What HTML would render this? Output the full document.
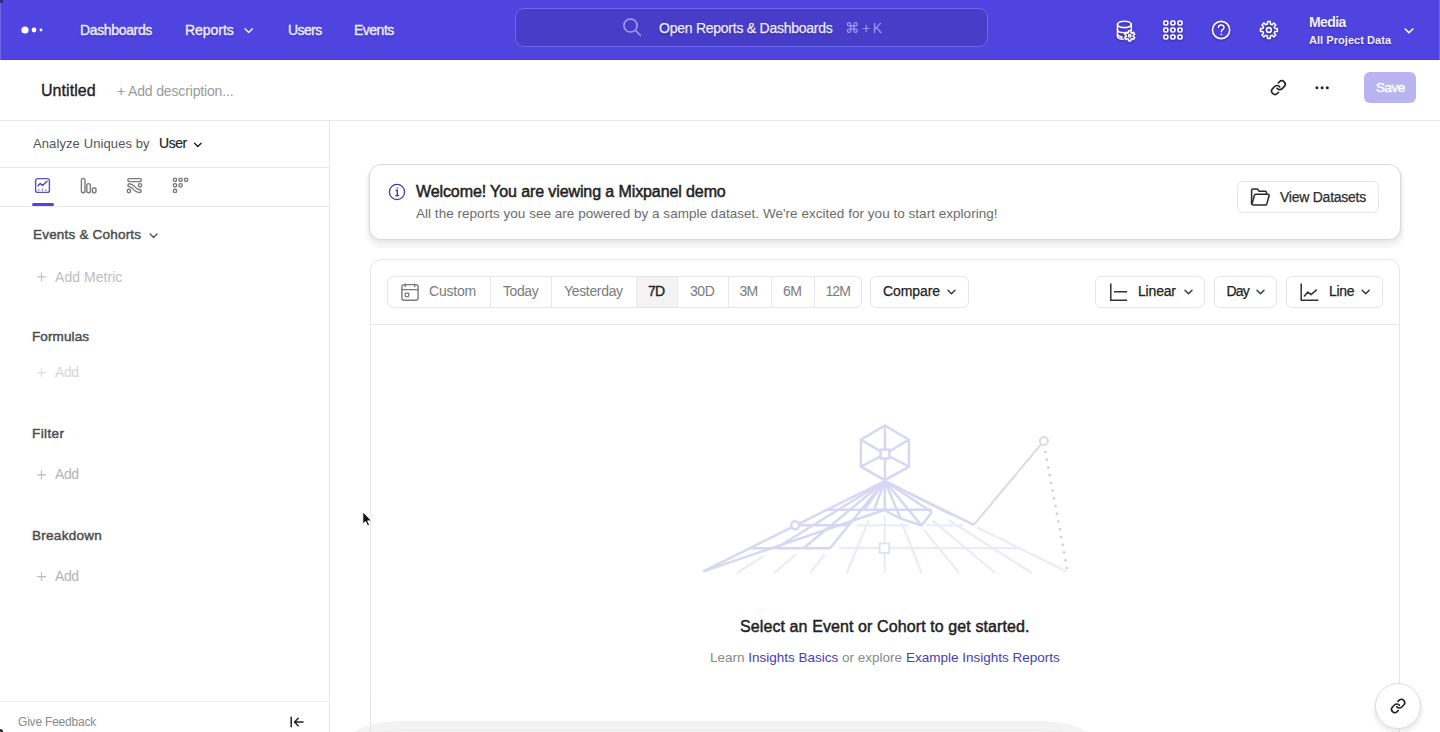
<!DOCTYPE html><html><head><meta charset="utf-8"><title>Insights</title><style>
*{box-sizing:border-box}
html,body{margin:0;padding:0;width:1440px;height:732px;overflow:hidden;background:#fff;font-family:"Liberation Sans",sans-serif}
.t{position:absolute;white-space:nowrap}
.a{position:absolute}
svg{position:absolute;overflow:visible}
</style></head><body>
<div class="a" style="left:0;top:0;width:1440px;height:60px;background:#4f44e0"></div>
<div class="a" style="left:0;top:59px;width:1440px;height:1px;background:#4a40d6"></div>
<div class="a" style="left:0;top:0;width:1px;height:60px;background:#6c63e6"></div>
<div class="a" style="left:-2px;top:-2px;width:5px;height:5px;border-radius:50%;background:#2e2878"></div>
<svg style="left:0;top:0" width="60" height="60"><circle cx="25" cy="30" r="3.6" fill="#fff"/><circle cx="34" cy="30" r="2.4" fill="#fff"/><circle cx="41" cy="30" r="1.4" fill="#fff"/></svg>
<div class="t " style="left:80px;top:22px;font-size:14px;line-height:16px;color:#ecebfc;font-weight:400;letter-spacing:-0.35px;text-shadow:0 1px 2px rgba(20,10,80,.45);-webkit-text-stroke:0.4px #ecebfc">Dashboards</div>
<div class="t " style="left:185px;top:22px;font-size:14px;line-height:16px;color:#ecebfc;font-weight:400;letter-spacing:-0.05px;text-shadow:0 1px 2px rgba(20,10,80,.45);-webkit-text-stroke:0.4px #ecebfc">Reports</div>
<svg style="left:0;top:0" width="1" height="1"><path d="M245 28.8 L248.7 32.5 L252.4 28.8" fill="none" stroke="#ecebfc" stroke-width="1.5" stroke-linecap="round" stroke-linejoin="round"/></svg>
<div class="t " style="left:288px;top:22px;font-size:14px;line-height:16px;color:#ecebfc;font-weight:400;letter-spacing:-0.55px;text-shadow:0 1px 2px rgba(20,10,80,.45);-webkit-text-stroke:0.4px #ecebfc">Users</div>
<div class="t " style="left:354px;top:22px;font-size:14px;line-height:16px;color:#ecebfc;font-weight:400;letter-spacing:-0.5px;text-shadow:0 1px 2px rgba(20,10,80,.45);-webkit-text-stroke:0.4px #ecebfc">Events</div>
<div class="a" style="left:515px;top:8px;width:473px;height:39px;border-radius:9px;background:#483dc8;border:1.5px solid #6d65ec"></div>
<svg style="left:0;top:0" width="1" height="1"><circle cx="630.5" cy="25.5" r="6.6" fill="none" stroke="#a6a0f2" stroke-width="1.5"/><path d="M635.3 30.3 L640.5 35.5" stroke="#a6a0f2" stroke-width="1.5" stroke-linecap="round"/></svg>
<div class="t " style="left:659px;top:19.6px;font-size:14px;line-height:16px;color:#ecebfc;font-weight:400;letter-spacing:-0.25px;text-shadow:0 1px 2px rgba(20,10,80,.45);-webkit-text-stroke:0.25px #ecebfc">Open Reports &amp; Dashboards</div>
<svg style="left:0;top:0" width="1" height="1"><g transform="translate(845.7,20.9) scale(0.55)" fill="none" stroke="#9d97ee" stroke-width="2.4" stroke-linecap="round" stroke-linejoin="round"><path d="M15 6v12a3 3 0 1 0 3-3H6a3 3 0 1 0 3 3V6a3 3 0 1 0-3 3h12a3 3 0 1 0-3-3"/></g></svg>
<div class="t " style="left:862px;top:19.6px;font-size:14px;line-height:16px;color:#9d97ee;font-weight:400;letter-spacing:-0.6px;">+ K</div>
<svg style="left:0;top:0;filter:drop-shadow(0 1px 1px rgba(20,10,80,.5))" width="1" height="1" fill="none" stroke="#ffffff" stroke-width="1.6" stroke-linecap="round" stroke-linejoin="round">
<ellipse cx="1124.4" cy="24.4" rx="6.9" ry="3.2"/>
<path d="M1117.5 24.4 V36.5 C1117.5 38.2 1120.3 39.2 1123.5 39.3"/>
<path d="M1131.3 24.4 V30.5"/>
<path d="M1117.5 29.8 C1117.5 31.6 1120.6 32.8 1124.4 32.8 C1126 32.8 1127.3 32.6 1128.5 32.2"/>
<path d="M1117.5 34.5 C1117.8 35.8 1119.5 36.7 1122 37.1"/>
</svg>
<svg style="left:0;top:0;filter:drop-shadow(0 1px 1px rgba(20,10,80,.5))" width="1" height="1" fill="none" stroke="#ffffff" stroke-width="1.5" stroke-linejoin="round"><path d="M1130.92 39.18 L1130.91 41.06 L1128.49 41.06 L1128.48 39.18 L1127.47 38.60 L1125.84 39.53 L1124.63 37.43 L1126.25 36.48 L1126.25 35.32 L1124.63 34.37 L1125.84 32.27 L1127.47 33.20 L1128.48 32.62 L1128.49 30.74 L1130.91 30.74 L1130.92 32.62 L1131.93 33.20 L1133.56 32.27 L1134.77 34.37 L1133.15 35.32 L1133.15 36.48 L1134.77 37.43 L1133.56 39.53 L1131.93 38.60Z"/><circle cx="1129.7" cy="35.8" r="1.2"/></svg>
<svg style="left:0;top:0;filter:drop-shadow(0 1px 1px rgba(20,10,80,.5))" width="1" height="1" fill="none" stroke="#ffffff" stroke-width="1.7"><rect x="1163.8" y="21" width="4" height="4" rx="1.3"/><rect x="1163.8" y="28" width="4" height="4" rx="1.3"/><rect x="1163.8" y="35" width="4" height="4" rx="1.3"/><rect x="1170.9" y="21" width="4" height="4" rx="1.3"/><rect x="1170.9" y="28" width="4" height="4" rx="1.3"/><rect x="1170.9" y="35" width="4" height="4" rx="1.3"/><rect x="1178" y="21" width="4" height="4" rx="1.3"/><rect x="1178" y="28" width="4" height="4" rx="1.3"/><rect x="1178" y="35" width="4" height="4" rx="1.3"/></svg>
<svg style="left:0;top:0;filter:drop-shadow(0 1px 1px rgba(20,10,80,.5))" width="1" height="1" fill="none" stroke="#ffffff" stroke-width="1.6" stroke-linecap="round">
<circle cx="1221.1" cy="30" r="8.6"/>
<path d="M1218.4 27.6 C1218.4 25.8 1219.7 25 1221.2 25 C1222.9 25 1224 26 1224 27.4 C1224 29.3 1221.4 29.5 1221.4 31.8" stroke-width="1.4"/>
<circle cx="1221.4" cy="34.4" r="0.3" fill="#ffffff" stroke-width="1.2"/>
</svg>
<svg style="left:0;top:0;filter:drop-shadow(0 1px 1px rgba(20,10,80,.5))" width="1" height="1" fill="none" stroke="#ffffff" stroke-width="1.6" stroke-linejoin="round"><path d="M1274.92 28.51 L1277.39 28.65 L1277.39 31.35 L1274.92 31.49 L1274.21 33.20 L1275.86 35.05 L1273.95 36.96 L1272.10 35.31 L1270.39 36.02 L1270.25 38.49 L1267.55 38.49 L1267.41 36.02 L1265.70 35.31 L1263.85 36.96 L1261.94 35.05 L1263.59 33.20 L1262.88 31.49 L1260.41 31.35 L1260.41 28.65 L1262.88 28.51 L1263.59 26.80 L1261.94 24.95 L1263.85 23.04 L1265.70 24.69 L1267.41 23.98 L1267.55 21.51 L1270.25 21.51 L1270.39 23.98 L1272.10 24.69 L1273.95 23.04 L1275.86 24.95 L1274.21 26.80Z"/><circle cx="1268.9" cy="30" r="2.4"/></svg>
<div class="t " style="left:1309px;top:14px;font-size:14px;line-height:16px;color:#f1f0fd;font-weight:700;letter-spacing:-0.6px;text-shadow:0 1px 2px rgba(20,10,80,.45);">Media</div>
<div class="t " style="left:1309px;top:33.8px;font-size:11px;line-height:12px;color:#f1f0fd;font-weight:700;letter-spacing:0.05px;text-shadow:0 1px 2px rgba(20,10,80,.45);">All Project Data</div>
<svg style="left:0;top:0" width="1" height="1"><path d="M1405.2 29 L1409 32.8 L1412.8 29" fill="none" stroke="#fff" stroke-width="1.6" stroke-linecap="round" stroke-linejoin="round"/></svg>
<div class="a" style="left:1439px;top:0;width:1px;height:60px;background:#6c63ee"></div>
<div class="t " style="left:41px;top:81.5px;font-size:16px;line-height:17px;color:#222;font-weight:400;letter-spacing:0.05px;-webkit-text-stroke:0.35px #222">Untitled</div>
<div class="t " style="left:117px;top:82.5px;font-size:14px;line-height:16px;color:#9a9a9a;font-weight:400;letter-spacing:-0.15px;">+ Add description...</div>
<div class="a" style="left:0;top:120px;width:1440px;height:1px;background:#e8e8e8"></div>
<svg style="left:0;top:0" width="1" height="1"><g transform="translate(1270.24,79.44) scale(0.68)" fill="none" stroke="#222" stroke-width="2.3529411764705883" stroke-linecap="round" stroke-linejoin="round">
<path d="M10 13a5 5 0 0 0 7.54.54l3-3a5 5 0 0 0-7.07-7.07l-1.72 1.71"/><path d="M14 11a5 5 0 0 0-7.54-.54l-3 3a5 5 0 0 0 7.07 7.07l1.71-1.71"/></g></svg>
<svg style="left:0;top:0" width="1" height="1" fill="#222"><circle cx="1316.9" cy="87.8" r="1.5"/><circle cx="1322.1" cy="87.8" r="1.5"/><circle cx="1327.3" cy="87.8" r="1.5"/></svg>
<div class="a" style="left:1364px;top:72px;width:52px;height:31px;border-radius:6px;background:#b9b4f0"></div>
<div class="t " style="left:1376px;top:79.6px;font-size:13.5px;line-height:15px;color:#fff;font-weight:400;letter-spacing:-0.5px;-webkit-text-stroke:0.4px #fff">Save</div>
<div class="a" style="left:329px;top:121px;width:1px;height:611px;background:#e8e8e8"></div>
<div class="t " style="left:33px;top:136px;font-size:13px;line-height:15px;color:#555;font-weight:400;letter-spacing:0.1px;">Analyze Uniques by</div>
<div class="t " style="left:159px;top:135px;font-size:14px;line-height:16px;color:#222;font-weight:400;letter-spacing:-0.45px;-webkit-text-stroke:0.2px #222">User</div>
<svg style="left:0;top:0" width="1" height="1"><path d="M194.5 143.2 L197.8 146.5 L201.1 143.2" fill="none" stroke="#222" stroke-width="1.4" stroke-linecap="round" stroke-linejoin="round"/></svg>
<div class="a" style="left:0;top:167px;width:329px;height:1px;background:#e8e8e8"></div>
<div class="a" style="left:0;top:206px;width:329px;height:1px;background:#e8e8e8"></div>
<div class="a" style="left:32px;top:203px;width:22px;height:3px;border-radius:2px;background:#4f44e0"></div>
<svg style="left:0;top:0" width="1" height="1" fill="none" stroke-width="1.4" stroke-linecap="round" stroke-linejoin="round">
<rect x="35.6" y="178.6" width="13.8" height="13.8" rx="2" stroke="#5a52c8"/>
<path d="M38 185.8 L40.3 183.5 L42.5 185.5 L47 181.2" stroke="#4a42b0"/>
<path d="M38.8 189.8 V190.2 M42.5 189.3 V190.4 M45.9 189.8 V190.2" stroke="#8a84d0"/>
<rect x="81.4" y="178.4" width="3.6" height="14.4" rx="1.8" stroke="#7a7a7a"/>
<rect x="86.8" y="183.6" width="3.6" height="9.2" rx="1.8" stroke="#7a7a7a"/>
<rect x="92.4" y="187.8" width="3.6" height="5" rx="1.8" stroke="#7a7a7a"/>
<rect x="127.8" y="178.6" width="13.6" height="3" rx="1.5" stroke="#7a7a7a"/>
<path d="M129.4 185.3 C133.6 185.3 134.6 191 138.9 191 H139.6" stroke="#7a7a7a" stroke-width="4.4"/>
<path d="M129.4 185.3 C133.6 185.3 134.6 191 138.9 191 H139.6" stroke="#fff" stroke-width="1.6"/>
<circle cx="140" cy="185.3" r="1.7" stroke="#7a7a7a"/>
<circle cx="128.9" cy="191" r="1.7" stroke="#7a7a7a"/>
<circle cx="175" cy="179.8" r="1.7" stroke="#7a7a7a"/><circle cx="180.6" cy="179.8" r="1.7" stroke="#7a7a7a"/><circle cx="186.1" cy="179.8" r="1.7" stroke="#7a7a7a"/>
<circle cx="175" cy="185.3" r="1.7" stroke="#7a7a7a"/><circle cx="180.6" cy="185.3" r="1.7" stroke="#7a7a7a"/>
<circle cx="175" cy="190.9" r="1.7" stroke="#7a7a7a"/>
</svg>
<div class="t " style="left:33px;top:227.2px;font-size:13.5px;line-height:15px;color:#4d4d4d;font-weight:400;letter-spacing:0.2px;-webkit-text-stroke:0.45px #4d4d4d">Events &amp; Cohorts</div>
<svg style="left:0;top:0" width="1" height="1"><path d="M150.2 234.1 L153.6 237.5 L157 234.1" fill="none" stroke="#555" stroke-width="1.4" stroke-linecap="round" stroke-linejoin="round"/></svg>
<svg style="left:0;top:0" width="1" height="1"><path d="M37.0 276.9 H46.0 M41.5 272.4 V281.4" stroke="#c4c4c4" stroke-width="1.2"/></svg>
<div class="t " style="left:55px;top:268.7px;font-size:14px;line-height:16px;color:#bdbdbd;font-weight:400;letter-spacing:0.05px;">Add Metric</div>
<div class="t " style="left:32px;top:329.2px;font-size:13.5px;line-height:15px;color:#4d4d4d;font-weight:400;letter-spacing:0.12px;-webkit-text-stroke:0.45px #4d4d4d">Formulas</div>
<svg style="left:0;top:0" width="1" height="1"><path d="M37.0 372.6 H46.0 M41.5 368.1 V377.1" stroke="#dedede" stroke-width="1.2"/></svg>
<div class="t " style="left:55px;top:364.4px;font-size:14px;line-height:16px;color:#d6d6d6;font-weight:400;letter-spacing:-0.45px;">Add</div>
<div class="t " style="left:32px;top:425.6px;font-size:13.5px;line-height:15px;color:#4d4d4d;font-weight:400;letter-spacing:0.4px;-webkit-text-stroke:0.45px #4d4d4d">Filter</div>
<svg style="left:0;top:0" width="1" height="1"><path d="M37.0 474.8 H46.0 M41.5 470.3 V479.3" stroke="#bdbdbd" stroke-width="1.2"/></svg>
<div class="t " style="left:55px;top:466.4px;font-size:14px;line-height:16px;color:#b3b3b3;font-weight:400;letter-spacing:-0.45px;">Add</div>
<div class="t " style="left:32px;top:527.6px;font-size:13.5px;line-height:15px;color:#4d4d4d;font-weight:400;letter-spacing:0.28px;-webkit-text-stroke:0.45px #4d4d4d">Breakdown</div>
<svg style="left:0;top:0" width="1" height="1"><path d="M37.0 576.7 H46.0 M41.5 572.2 V581.2" stroke="#bdbdbd" stroke-width="1.2"/></svg>
<div class="t " style="left:55px;top:568.3px;font-size:14px;line-height:16px;color:#b3b3b3;font-weight:400;letter-spacing:-0.45px;">Add</div>
<div class="a" style="left:1px;top:701px;width:328px;height:1px;background:#eeeeee"></div>
<div class="a" style="left:-2px;top:729px;width:5px;height:5px;border-radius:50%;background:#333"></div>
<div class="t " style="left:18px;top:715.1px;font-size:12px;line-height:14px;color:#8a8a8a;font-weight:400;letter-spacing:-0.2px;">Give Feedback</div>
<svg style="left:0;top:0" width="1" height="1" fill="none" stroke="#222" stroke-width="1.5" stroke-linecap="round" stroke-linejoin="round"><path d="M291.2 717.2 V726.8"/><path d="M303 722 H294.6 M298.2 718.3 L294.5 722 L298.2 725.7"/></svg>
<div class="a" style="left:369px;top:164px;width:1032px;height:76px;border-radius:12px;background:#fff;border:1px solid #d9d9d9;box-shadow:0 2px 1px 1px rgba(0,0,0,.045), 0 4.5px 1.5px 3px rgba(0,0,0,.04)"></div>
<svg style="left:0;top:0" width="1" height="1" fill="none" stroke="#453d9c" stroke-width="1.3"><circle cx="397" cy="192" r="7.6"/>
<path d="M395.6 190.4 L397.3 190.2 V195.6 M395.3 195.6 H399.1" stroke="#3a3470" stroke-width="1.3"/><circle cx="397.2" cy="188" r="0.7" fill="#3a3470" stroke="none"/></svg>
<div class="t " style="left:416px;top:182.6px;font-size:16px;line-height:17px;color:#1f1f1f;font-weight:400;letter-spacing:-0.1px;-webkit-text-stroke:0.5px #1f1f1f">Welcome! You are viewing a Mixpanel demo</div>
<div class="t " style="left:416px;top:206px;font-size:13.5px;line-height:15px;color:#6b6b6b;font-weight:400;letter-spacing:0.03px;">All the reports you see are powered by a sample dataset. We&#39;re excited for you to start exploring!</div>
<div class="a" style="left:1237px;top:181px;width:142px;height:32px;border-radius:6px;background:#fff;border:1px solid #e6e6e6"></div>
<svg style="left:0;top:0" width="1" height="1" fill="none" stroke="#2a2a2a" stroke-width="1.5" stroke-linejoin="round"><path d="M1251.6 204.8 V190.4 C1251.6 189.6 1252.1 189.1 1252.9 189.1 H1257.3 L1259.2 191.2 H1265.2 C1266 191.2 1266.5 191.7 1266.5 192.5 V194.3"/><path d="M1251.9 204.6 L1254.4 195.3 C1254.6 194.7 1255.1 194.3 1255.8 194.3 H1268 C1268.8 194.3 1269.3 195 1269.1 195.7 L1266.8 204 C1266.6 204.6 1266.1 205 1265.4 205 H1252.3"/></svg>
<div class="t " style="left:1280px;top:189px;font-size:14px;line-height:16px;color:#2e2e2e;font-weight:400;letter-spacing:-0.25px;-webkit-text-stroke:0.25px #2e2e2e">View Datasets</div>
<div class="a" style="left:370px;top:259px;width:1030px;height:520px;border-radius:11px;background:#fff;border:1px solid #e7e7e7"></div>
<div class="a" style="left:371px;top:324px;width:1028px;height:1px;background:#e8e8e8"></div>
<div class="a" style="left:387px;top:276px;width:475px;height:32px;border-radius:6px;border:1px solid #e6e6e6;overflow:hidden"><div class="a" style="left:248px;top:0;width:41px;height:30px;background:#f3f3f3"></div><div class="a" style="left:101.5px;top:0;width:1px;height:30px;background:#e8e8e8"></div><div class="a" style="left:162.5px;top:0;width:1px;height:30px;background:#e8e8e8"></div><div class="a" style="left:247.5px;top:0;width:1px;height:30px;background:#e8e8e8"></div><div class="a" style="left:288.5px;top:0;width:1px;height:30px;background:#e8e8e8"></div><div class="a" style="left:339.5px;top:0;width:1px;height:30px;background:#e8e8e8"></div><div class="a" style="left:382.5px;top:0;width:1px;height:30px;background:#e8e8e8"></div><div class="a" style="left:426px;top:0;width:1px;height:30px;background:#e8e8e8"></div></div>
<svg style="left:0;top:0" width="1" height="1" fill="none" stroke="#7a7a7a" stroke-width="1.4" stroke-linecap="round"><rect x="401.9" y="284.6" width="16.2" height="15.6" rx="2.2"/><path d="M402 289.6 H418 M405.3 284.2 V286.6 M414.7 284.2 V286.6"/><rect x="405.3" y="293.2" width="3.4" height="3.4" rx="0.5" stroke-width="1.3"/></svg>
<div class="t " style="left:429px;top:283.3px;font-size:14px;line-height:16px;color:#7b7b7b;font-weight:400;letter-spacing:-0.2px;">Custom</div>
<div class="t " style="left:503px;top:283.3px;font-size:14px;line-height:16px;color:#7b7b7b;font-weight:400;letter-spacing:-0.4px;">Today</div>
<div class="t " style="left:564px;top:283.3px;font-size:14px;line-height:16px;color:#7b7b7b;font-weight:400;letter-spacing:-0.33px;">Yesterday</div>
<div class="t " style="left:648px;top:283.3px;font-size:14px;line-height:16px;color:#1f1f1f;font-weight:400;letter-spacing:-0.8px;-webkit-text-stroke:0.35px #1f1f1f">7D</div>
<div class="t " style="left:690px;top:283.3px;font-size:14px;line-height:16px;color:#7b7b7b;font-weight:400;letter-spacing:-0.45px;">30D</div>
<div class="t " style="left:739.5px;top:283.3px;font-size:14px;line-height:16px;color:#7b7b7b;font-weight:400;letter-spacing:-0.7px;">3M</div>
<div class="t " style="left:783px;top:283.3px;font-size:14px;line-height:16px;color:#7b7b7b;font-weight:400;letter-spacing:-0.6px;">6M</div>
<div class="t " style="left:825.5px;top:283.3px;font-size:14px;line-height:16px;color:#7b7b7b;font-weight:400;letter-spacing:-0.95px;">12M</div>
<div class="a" style="left:870px;top:276px;width:99px;height:32px;border-radius:6px;border:1px solid #e6e6e6"></div>
<div class="t " style="left:883px;top:283.3px;font-size:14px;line-height:16px;color:#222;font-weight:400;letter-spacing:-0.1px;-webkit-text-stroke:0.25px #222">Compare</div>
<svg style="left:0;top:0" width="1" height="1"><path d="M948 290.2 L951.5 293.7 L955 290.2" fill="none" stroke="#333" stroke-width="1.4" stroke-linecap="round" stroke-linejoin="round"/></svg>
<div class="a" style="left:1095px;top:276px;width:110px;height:32px;border-radius:6px;border:1px solid #e6e6e6"></div>
<svg style="left:0;top:0" width="1" height="1" fill="none" stroke="#333" stroke-width="1.5"><path d="M1110.8 283.4 V300.2 H1127.2 M1114 291.8 H1127.2"/></svg>
<div class="t " style="left:1138px;top:283.3px;font-size:14px;line-height:16px;color:#222;font-weight:400;letter-spacing:-0.18px;-webkit-text-stroke:0.25px #222">Linear</div>
<svg style="left:0;top:0" width="1" height="1"><path d="M1185 290.2 L1188.5 293.7 L1192 290.2" fill="none" stroke="#333" stroke-width="1.4" stroke-linecap="round" stroke-linejoin="round"/></svg>
<div class="a" style="left:1214px;top:276px;width:63px;height:32px;border-radius:6px;border:1px solid #e6e6e6"></div>
<div class="t " style="left:1226.5px;top:283.3px;font-size:14px;line-height:16px;color:#222;font-weight:400;letter-spacing:-0.85px;-webkit-text-stroke:0.25px #222">Day</div>
<svg style="left:0;top:0" width="1" height="1"><path d="M1257 290.2 L1260.5 293.7 L1264 290.2" fill="none" stroke="#333" stroke-width="1.4" stroke-linecap="round" stroke-linejoin="round"/></svg>
<div class="a" style="left:1286px;top:276px;width:97px;height:32px;border-radius:6px;border:1px solid #e6e6e6"></div>
<svg style="left:0;top:0" width="1" height="1" fill="none" stroke="#333" stroke-width="1.5" stroke-linejoin="round"><path d="M1301.2 283.4 V300.2 H1318.3"/><path d="M1304 296.5 L1307.8 292 L1311 294.6 L1316.8 289.6"/></svg>
<div class="t " style="left:1329px;top:283.3px;font-size:14px;line-height:16px;color:#222;font-weight:400;letter-spacing:-0.28px;-webkit-text-stroke:0.25px #222">Line</div>
<svg style="left:0;top:0" width="1" height="1"><path d="M1362.2 290.2 L1365.7 293.7 L1369.2 290.2" fill="none" stroke="#333" stroke-width="1.4" stroke-linecap="round" stroke-linejoin="round"/></svg>
<svg style="left:0;top:0" width="1" height="1" stroke-linecap="butt"><line x1="737" y1="573" x2="764" y2="555.6" stroke="#ebebf9" stroke-width="2.2"/><line x1="774" y1="573" x2="796.4" y2="554" stroke="#ebebf9" stroke-width="2.2"/><line x1="810" y1="573" x2="825" y2="554" stroke="#ebebf9" stroke-width="2.2"/><line x1="846.8" y1="573" x2="868.6" y2="520.3" stroke="#ebebf9" stroke-width="2.2"/><line x1="901.7" y1="522.6" x2="921.6" y2="573" stroke="#ebebf9" stroke-width="2.2"/><line x1="923.8" y1="529.6" x2="959.1" y2="573" stroke="#ebebf9" stroke-width="2.2"/><line x1="932.5" y1="520.3" x2="995.2" y2="573" stroke="#ebebf9" stroke-width="2.2"/><line x1="948.8" y1="520.3" x2="1032" y2="573" stroke="#ebebf9" stroke-width="2.2"/><line x1="977.2" y1="527.3" x2="1066.6" y2="571.4" stroke="#ebebf9" stroke-width="2.2"/><line x1="838.5" y1="548.2" x2="1018.5" y2="548.2" stroke="#ebebf9" stroke-width="2.2"/><line x1="856.5" y1="525.4" x2="908.7" y2="525.4" stroke="#ebebf9" stroke-width="2.2"/><line x1="926.1" y1="525.4" x2="963.3" y2="525.4" stroke="#ebebf9" stroke-width="2.2"/><line x1="884.8" y1="515.6" x2="884.8" y2="573" stroke="#ebebf9" stroke-width="2.2"/><rect x="879.6" y="543.4" width="9.6" height="9.6" fill="#fff" stroke="#e2e2f7" stroke-width="2"/><line x1="973.7" y1="524.9" x2="1040.8" y2="444.6" stroke="#d9d9e8" stroke-width="2.0"/><circle cx="1043.9" cy="441" r="4" fill="#fff" stroke="#d9d9e8" stroke-width="2"/><circle cx="1045.4" cy="452.0" r="1.35" fill="#cfcfdf"/><circle cx="1046.8" cy="459.7" r="1.35" fill="#cfcfdf"/><circle cx="1048.3" cy="467.5" r="1.35" fill="#cfcfdf"/><circle cx="1049.7" cy="475.2" r="1.35" fill="#cfcfdf"/><circle cx="1051.2" cy="482.9" r="1.35" fill="#cfcfdf"/><circle cx="1052.6" cy="490.7" r="1.35" fill="#cfcfdf"/><circle cx="1054.0" cy="498.4" r="1.35" fill="#cfcfdf"/><circle cx="1055.5" cy="506.1" r="1.35" fill="#cfcfdf"/><circle cx="1056.9" cy="513.9" r="1.35" fill="#cfcfdf"/><circle cx="1058.4" cy="521.6" r="1.35" fill="#cfcfdf"/><circle cx="1059.8" cy="529.3" r="1.35" fill="#cfcfdf"/><circle cx="1061.2" cy="537.1" r="1.35" fill="#cfcfdf"/><circle cx="1062.7" cy="544.8" r="1.35" fill="#cfcfdf"/><circle cx="1064.1" cy="552.5" r="1.35" fill="#cfcfdf"/><circle cx="1065.6" cy="560.3" r="1.35" fill="#cfcfdf"/><circle cx="1067.0" cy="568.0" r="1.35" fill="#cfcfdf"/><line x1="884.8" y1="481" x2="703.3" y2="571.4" stroke="#d7d7f5" stroke-width="2.5"/><line x1="884.8" y1="481" x2="776" y2="548.2" stroke="#d7d7f5" stroke-width="2.5"/><line x1="884.8" y1="481" x2="803.4" y2="548.2" stroke="#d7d7f5" stroke-width="2.5"/><line x1="884.8" y1="481" x2="830" y2="548.2" stroke="#d7d7f5" stroke-width="2.5"/><line x1="884.8" y1="481" x2="864.3" y2="509.8" stroke="#d7d7f5" stroke-width="2.5"/><line x1="884.8" y1="481" x2="874.2" y2="509.8" stroke="#d7d7f5" stroke-width="2.5"/><line x1="884.8" y1="481" x2="884.8" y2="509.8" stroke="#d7d7f5" stroke-width="2.5"/><line x1="703.3" y1="571.4" x2="884.8" y2="509.8" stroke="#d7d7f5" stroke-width="2.5"/><line x1="827" y1="509.8" x2="931.9" y2="509.8" stroke="#d7d7f5" stroke-width="2.5"/><line x1="799" y1="525.3" x2="849.2" y2="525.3" stroke="#d7d7f5" stroke-width="2.5"/><line x1="750.6" y1="548.2" x2="830" y2="548.2" stroke="#d7d7f5" stroke-width="2.5"/><polyline points="884.8,510.5 900.6,518.6 921.5,525.5 931.9,512.2" fill="none" stroke="#d7d7f5" stroke-width="2.5" stroke-linejoin="miter"/><line x1="884.8" y1="481" x2="900.6" y2="518.6" stroke="#d7d7f5" stroke-width="2.5"/><line x1="884.8" y1="481" x2="921.5" y2="525.5" stroke="#d7d7f5" stroke-width="2.5"/><line x1="884.8" y1="481" x2="931.9" y2="512.2" stroke="#d7d7f5" stroke-width="2.5"/><line x1="884.8" y1="481" x2="952" y2="515" stroke="#d7d7f5" stroke-width="2.5"/><line x1="884.8" y1="481" x2="973.7" y2="524.9" stroke="#d7d7f5" stroke-width="2.5"/><circle cx="795.2" cy="525.2" r="4" fill="#fff" stroke="#d7d7f5" stroke-width="2.5"/><polygon points="884.9,425.5 908.9,439.6 908.9,466.7 884.9,480.2 860.9,466.7 860.9,439.6" fill="none" stroke="#d7d7f5" stroke-width="2.5" stroke-linejoin="miter"/><line x1="885" y1="454" x2="884.9" y2="425.5" stroke="#d7d7f5" stroke-width="2.5"/><line x1="885" y1="454" x2="908.9" y2="439.6" stroke="#d7d7f5" stroke-width="2.5"/><line x1="885" y1="454" x2="908.9" y2="466.7" stroke="#d7d7f5" stroke-width="2.5"/><line x1="885" y1="454" x2="884.9" y2="480.2" stroke="#d7d7f5" stroke-width="2.5"/><line x1="885" y1="454" x2="860.9" y2="466.7" stroke="#d7d7f5" stroke-width="2.5"/><line x1="885" y1="454" x2="860.9" y2="439.6" stroke="#d7d7f5" stroke-width="2.5"/><rect x="880.6" y="449.6" width="8.8" height="8.8" fill="#fff" stroke="#d7d7f5" stroke-width="2.5"/></svg>
<div class="t " style="left:740px;top:617.5px;font-size:16px;line-height:17px;color:#222;font-weight:400;letter-spacing:0.1px;-webkit-text-stroke:0.45px #222">Select an Event or Cohort to get started.</div>
<div class="t " style="left:710px;top:650px;font-size:13.5px;line-height:15px;color:#8a8a8a;font-weight:400;letter-spacing:0.0px;">Learn <span style="color:#463db4">Insights Basics</span> or explore <span style="color:#463db4">Example Insights Reports</span></div>
<div class="a" style="left:348px;top:721px;width:745px;height:40px;border-radius:60px/20px;background:#f3f3f3;box-shadow:inset 0 8px 0 #f3f3f3, inset 0 9px 2px #ececec"></div>
<div class="a" style="left:370px;top:700px;width:1px;height:32px;background:#e4e4e4"></div>
<div class="a" style="left:1375px;top:683px;width:46px;height:46px;border-radius:50%;background:#fff;border:1px solid #dcdcdc;box-shadow:0 2px 1px 1px rgba(0,0,0,.035), 0 4px 1.5px 2.5px rgba(0,0,0,.03)"></div>
<svg style="left:0;top:0" width="1" height="1"><g transform="translate(1390.1799999999998,698.08) scale(0.66)" fill="none" stroke="#222" stroke-width="2.4242424242424243" stroke-linecap="round" stroke-linejoin="round">
<path d="M10 13a5 5 0 0 0 7.54.54l3-3a5 5 0 0 0-7.07-7.07l-1.72 1.71"/><path d="M14 11a5 5 0 0 0-7.54-.54l-3 3a5 5 0 0 0 7.07 7.07l1.71-1.71"/></g></svg>
<svg style="left:362px;top:511px" width="12" height="18"><path d="M0.8 0.8 V13.2 L3.6 10.6 L5.6 15 L7.6 14.1 L5.7 9.9 H9.6 Z" fill="#111" stroke="#fff" stroke-width="1"/></svg>
</body></html>
